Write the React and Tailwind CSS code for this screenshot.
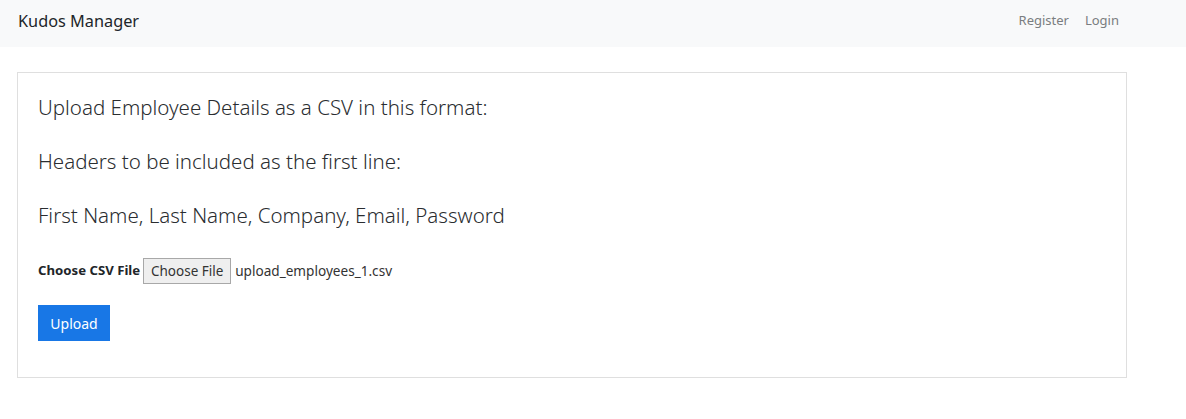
export default function App() {
  const font = { fontFamily: '"Source Sans Pro", "Noto Sans", "Open Sans", sans-serif' };
  return (
    <div className="min-h-[419px] bg-white text-[#212529]" style={font}>
      <nav className="flex h-[47px] items-center justify-between bg-[#f8f9fa] pb-[5px] pl-[18px] pr-[67px]">
        <span className="text-[16.3px] leading-none">Kudos Manager</span>
        <div className="flex gap-[16px] text-[13px] text-[#7a7d80]">
          <span>Register</span>
          <span>Login</span>
        </div>
      </nav>
      <div className="ml-[17px] mt-[25px] w-[1110px] border border-[#dfdfdf] px-[20px] pt-[19px] pb-[36px]">
        <p className="text-[20.5px] font-light leading-[30px] text-[#2a2d30]">Upload Employee Details as a CSV in this format:</p>
        <p className="mt-[24px] text-[20.5px] font-light leading-[30px] text-[#2a2d30]">Headers to be included as the first line:</p>
        <p className="mt-[24px] text-[20.5px] font-light leading-[30px] text-[#2a2d30]">First Name, Last Name, Company, Email, Password</p>
        <div className="mt-[28px] flex items-center">
          <span className="mr-[3px] text-[13.2px] font-bold">Choose CSV File</span>
          <span className="flex h-[26px] w-[88px] items-center justify-center border border-[#a8a8a8] bg-[#efefef] text-[13.5px] text-[#333]">Choose File</span>
          <span className="ml-[4px] text-[13.6px] text-[#333]">upload_employees_1.csv</span>
        </div>
        <button className="mt-[21px] flex h-[36px] w-[72px] items-center justify-center bg-[#1877e6] text-[14px] text-white">Upload</button>
      </div>
    </div>
  );
}
